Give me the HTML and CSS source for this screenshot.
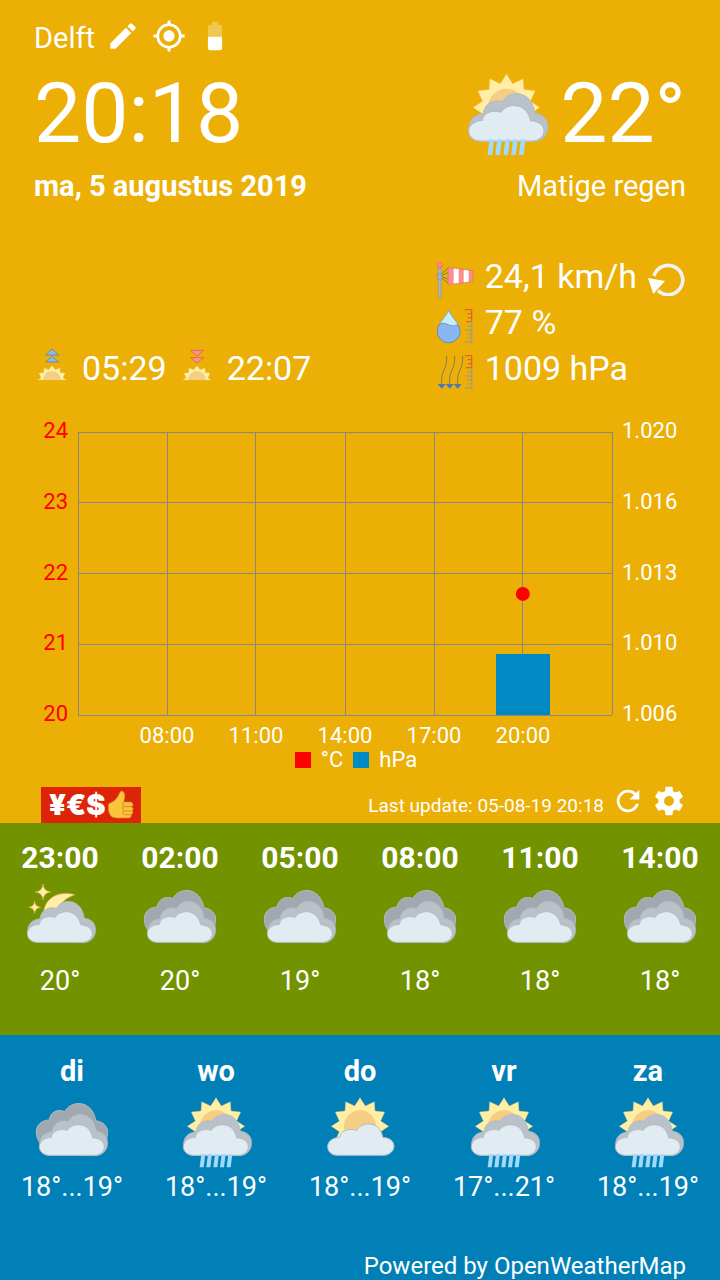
FILE: index.html
```html
<!DOCTYPE html>
<html lang="nl">
<head>
<meta charset="utf-8">
<meta name="viewport" content="width=device-width, initial-scale=1">
<title>Delft</title>
<link rel="stylesheet" href="styles.css">
</head>
<body>
<svg class="defs" aria-hidden="true">
  <defs>
    <g id="sun">
      <path class="sun-rays" d="M120 8L136 33L163 20L165 48L194 51L182 78L206 94L182 110L194 137L165 140L163 168L137 156L120 180L103 156L77 168L75 140L46 137L58 110L34 94L58 78L46 51L75 48L77 20L104 33Z"/>
      <circle class="sun-core" cx="120" cy="94" r="48"/>
    </g>
    <path id="cloud-light" class="cloud-light" d="M53 181C33 181 23 168 23 155C23 139 38 128 59 127C60 108 84 98 110 106C120 82 180 72 188 127C210 128 222 140 222 154C222 168 208 181 190 181Z"/>
    <g id="cloud-pair">
      <path class="cloud-mid" d="M53 181C30 178 22 163 23 143C25 122 42 111 60 110C62 86 84 72 110 79C125 47 185 48 193 108C216 112 227 125 227 144C227 167 210 182 190 182Z"/>
      <path class="cloud-light" d="M53 181C33 181 22 168 22 155C22 139 37 128 58 127C59 109 82 99 106 106C116 84 172 76 182 128C205 130 217 141 217 155C217 169 204 181 186 181Z"/>
    </g>
    <path id="rain" class="rain" d="M76 177h12l-5 40h-12zM96 177h12l-5 40h-12zM117 177h12l-5 40h-12zM137 177h12l-5 40h-12zM157 177h12l-5 40h-12z"/>
    <symbol id="rain-sun" viewBox="0 0 240 240"><use href="#sun"/><use href="#cloud-pair"/><use href="#rain"/></symbol>
    <symbol id="partly" viewBox="0 0 240 240"><use href="#sun"/><use href="#cloud-light"/></symbol>
    <symbol id="overcast" viewBox="0 0 240 240">
      <path class="cloud-dark" d="M40 155C20 145 13 130 13 110C13 90 30 75 52 75C54 52 76 40 98 50C118 13 182 15 191 77C212 80 227 92 227 112C227 130 220 145 205 155Z"/>
      <use href="#cloud-pair"/>
    </symbol>
    <symbol id="night" viewBox="0 0 240 240">
      <path class="moon" d="M165 38C122 26 78 42 71 88L112 88C118 64 140 46 165 38Z"/>
      <path class="moon" d="M69 6Q71 28 93 30Q71 32 69 54Q67 32 45 30Q67 28 69 6ZM44 58Q46 74 62 76Q46 78 44 94Q42 78 26 76Q42 74 44 58Z"/>
      <use href="#cloud-pair"/>
    </symbol>
    <g id="half-sun">
      <path class="sun-rays" d="M11 96L21 90L15 75L29 74L30 60L44 65L54 53L64 65L78 60L79 74L93 75L87 90L97 96Z"/>
      <path class="sun-core" d="M27 96a27 27 0 0 1 54 0z"/>
    </g>
    <g id="ruler" fill="none" stroke-width="4">
      <path stroke="#d9692a" d="M98 29H119V65M119 41H107M119 53H107M119 65H102"/>
      <path stroke="#ab9f72" d="M119 65V126H98M119 78H107M119 90H100M119 102H107M119 114H107"/>
    </g>
  </defs>
</svg>

<main class="app">
  <section class="current">
    <header class="topbar">
      <span class="city">Delft</span>
      <button class="icon-btn" aria-label="Plaats wijzigen"><svg viewBox="0 0 24 24"><path d="M3 17.25V21h3.75L17.81 9.94l-3.75-3.75L3 17.25zM20.71 7.04a1 1 0 0 0 0-1.41l-2.34-2.34a1 1 0 0 0-1.41 0l-1.83 1.83 3.75 3.75 1.83-1.83z"/></svg></button>
      <button class="icon-btn" aria-label="Huidige locatie"><svg viewBox="0 0 24 24"><path d="M12 8a4 4 0 1 0 0 8 4 4 0 0 0 0-8zm8.94 3A8.99 8.99 0 0 0 13 3.06V1h-2v2.06A8.99 8.99 0 0 0 3.06 11H1v2h2.06A8.99 8.99 0 0 0 11 20.94V23h2v-2.06A8.99 8.99 0 0 0 20.94 13H23v-2h-2.06zM12 19a7 7 0 1 1 0-14 7 7 0 0 1 0 14z"/></svg></button>
      <svg class="battery" viewBox="0 0 24 24" role="img" aria-label="Batterij"><path opacity=".3" d="M17 5.33C17 4.6 16.4 4 15.67 4H14V2h-4v2H8.33C7.6 4 7 4.6 7 5.33V12.5h10V5.33z"/><path d="M7 12.5v8.17C7 21.4 7.6 22 8.33 22h7.33c.74 0 1.34-.6 1.34-1.33V12.5H7z"/></svg>
    </header>

    <div class="now">
      <time class="big">20:18</time>
      <div class="now-temp">
        <svg class="now-icon"><use href="#rain-sun"/></svg>
        <span class="big">22°</span>
      </div>
    </div>
    <div class="summary">
      <strong>ma, 5 augustus 2019</strong>
      <span>Matige regen</span>
    </div>

    <div class="details">
      <div class="sun-times">
        <svg class="sun-icon" viewBox="0 0 108 120"><path class="tri-up" d="M35 21L54 3L74 21ZM35 42L54 25L74 42Z"/><use href="#half-sun"/></svg>
        <span>05:29</span>
        <svg class="sun-icon" viewBox="0 0 108 120"><path class="tri-down" d="M35 7L54 24L74 7ZM35 29L54 45L74 29Z"/><use href="#half-sun"/></svg>
        <span>22:07</span>
      </div>
      <div class="measures">
        <div class="measure">
          <svg class="measure-icon" viewBox="0 0 132 132">
            <path fill="none" stroke="#7b7f5c" stroke-width="3" d="M28 60L49 42M28 65L49 55M28 68L49 75M28 71L49 88"/>
            <path fill="#a8b8c8" stroke="#8798a8" stroke-width="2" d="M19 42h8v88h-8zM16 59h14v17H16z"/>
            <circle cx="23" cy="33" r="8" fill="#ff8a80" stroke="#e0675f" stroke-width="2"/>
            <path fill="#fff" d="M49 40L122 50V83L49 92Z"/>
            <path fill="#ff8c8c" d="M49 40L65 42V90L49 92ZM80 44L95 46V87L80 89ZM110 48L122 50V83L110 85Z"/>
            <path fill="none" stroke="#e0675f" stroke-width="2" d="M49 40L122 50V83L49 92Z"/>
          </svg>
          <span>24,1 km/h</span>
          <svg class="wind-dir" viewBox="0 0 120 120"><path fill="none" stroke="#f2f2f2" stroke-width="11" d="M24 60A44 44 0 1 1 36 104"/><path fill="#fff" d="M6 66L57 75L22 114Z"/></svg>
        </div>
        <div class="measure">
          <svg class="measure-icon" viewBox="0 0 132 132">
            <path fill="#c5ecff" stroke="#5b9bc4" stroke-width="2" d="M50 30C44 50 16 70 16 94A34 34 0 0 0 84 94C84 70 56 50 50 30Z"/>
            <path fill="#8bb7f0" stroke="#4e7ab5" stroke-width="2" d="M23 72Q37 66 49 74Q62 82 77 74Q84 84 84 94A34 34 0 0 1 16 94Q16 82 23 72Z"/>
            <use href="#ruler"/>
          </svg>
          <span>77 %</span>
        </div>
        <div class="measure">
          <svg class="measure-icon" viewBox="0 0 132 132">
            <path fill="none" stroke="#7f7d5f" stroke-width="3" d="M44 30C48 65 25 75 29 115M68 30C72 65 49 75 53 115M92 30C96 65 73 75 77 115"/>
            <path fill="#4778c0" d="M17 114h24l-12 14zM41 114h24l-12 14zM65 114h24l-12 14z"/>
            <use href="#ruler"/>
          </svg>
          <span>1009 hPa</span>
        </div>
      </div>
    </div>

    <div class="chart">
      <div class="axis axis-left"><span>24</span><span>23</span><span>22</span><span>21</span><span>20</span></div>
      <svg class="plot" role="img" aria-label="Temperatuur en luchtdruk">
        <g class="grid-lines">
          <line x1="0" x2="100%" y1="0" y2="0"/><line x1="0" x2="100%" y1="25%" y2="25%"/><line x1="0" x2="100%" y1="50%" y2="50%"/><line x1="0" x2="100%" y1="75%" y2="75%"/><line x1="0" x2="100%" y1="100%" y2="100%"/>
          <line x1="0" x2="0" y1="0" y2="100%"/><line x1="16.667%" x2="16.667%" y1="0" y2="100%"/><line x1="33.333%" x2="33.333%" y1="0" y2="100%"/><line x1="50%" x2="50%" y1="0" y2="100%"/><line x1="66.667%" x2="66.667%" y1="0" y2="100%"/><line x1="83.333%" x2="83.333%" y1="0" y2="100%"/><line x1="100%" x2="100%" y1="0" y2="100%"/>
        </g>
        <rect class="bar" x="78.2%" y="78.6%" width="10.1%" height="21.4%"/>
        <circle class="dot" cx="83.3%" cy="57.2%" r="7"/>
      </svg>
      <div class="axis axis-right"><span>1.020</span><span>1.016</span><span>1.013</span><span>1.010</span><span>1.006</span></div>
      <div class="axis-x"><span>08:00</span><span>11:00</span><span>14:00</span><span>17:00</span><span>20:00</span></div>
      <div class="legend">
        <i class="swatch swatch-temp"></i><span>°C</span>
        <i class="swatch swatch-press"></i><span>hPa</span>
      </div>
    </div>

    <footer class="status">
      <a class="yes" href="#"><span>¥€$</span><svg viewBox="0 0 84 90"><path fill="#fbc43d" stroke="#d98a1c" stroke-width="2" d="M4 48Q2 40 12 38Q30 30 38 8Q42 0 49 5Q57 12 50 36H70Q79 37 78 45Q77 49 73 50Q82 54 76 63Q81 69 73 74Q75 82 65 84H30Q16 84 10 76Q2 62 4 48Z"/><path fill="none" stroke="#d98a1c" stroke-width="3" d="M50 36Q44 42 50 50H74M47 50Q44 58 52 63H76M49 63Q44 70 53 74H73"/></svg></a>
      <span class="updated">Last update: 05-08-19 20:18</span>
      <button class="icon-btn" aria-label="Vernieuwen"><svg viewBox="0 0 24 24"><path d="M17.65 6.35A7.96 7.96 0 0 0 12 4a8 8 0 1 0 7.73 10h-2.08A6 6 0 1 1 12 6c1.66 0 3.14.69 4.22 1.78L13 11h7V4l-2.35 2.35z"/></svg></button>
      <button class="icon-btn" aria-label="Instellingen"><svg viewBox="0 0 24 24"><path d="M19.43 12.98c.04-.32.07-.64.07-.98s-.03-.66-.07-.98l2.11-1.65c.19-.15.24-.42.12-.64l-2-3.46c-.12-.22-.39-.3-.61-.22l-2.49 1c-.52-.4-1.08-.73-1.69-.98l-.38-2.65A.49.49 0 0 0 14 2h-4c-.25 0-.46.18-.49.42l-.38 2.65c-.61.25-1.17.59-1.69.98l-2.49-1c-.23-.09-.49 0-.61.22l-2 3.46c-.13.22-.07.49.12.64l2.11 1.65c-.04.32-.07.65-.07.98s.03.66.07.98l-2.11 1.65c-.19.15-.24.42-.12.64l2 3.46c.12.22.39.3.61.22l2.49-1c.52.4 1.08.73 1.69.98l.38 2.65c.03.24.24.42.49.42h4c.25 0 .46-.18.49-.42l.38-2.65c.61-.25 1.17-.59 1.69-.98l2.49 1c.23.09.49 0 .61-.22l2-3.46c.12-.22.07-.49-.12-.64l-2.11-1.65zM12 15.5a3.5 3.5 0 1 1 0-7 3.5 3.5 0 0 1 0 7z"/></svg></button>
    </footer>
  </section>

  <section class="forecast hours">
    <article><h2>23:00</h2><svg><use href="#night"/></svg><p>20°</p></article>
    <article><h2>02:00</h2><svg><use href="#overcast"/></svg><p>20°</p></article>
    <article><h2>05:00</h2><svg><use href="#overcast"/></svg><p>19°</p></article>
    <article><h2>08:00</h2><svg><use href="#overcast"/></svg><p>18°</p></article>
    <article><h2>11:00</h2><svg><use href="#overcast"/></svg><p>18°</p></article>
    <article><h2>14:00</h2><svg><use href="#overcast"/></svg><p>18°</p></article>
  </section>

  <section class="week">
    <div class="forecast days">
      <article><h2>di</h2><svg><use href="#overcast"/></svg><p>18°...19°</p></article>
      <article><h2>wo</h2><svg><use href="#rain-sun"/></svg><p>18°...19°</p></article>
      <article><h2>do</h2><svg><use href="#partly"/></svg><p>18°...19°</p></article>
      <article><h2>vr</h2><svg><use href="#rain-sun"/></svg><p>17°...21°</p></article>
      <article><h2>za</h2><svg><use href="#rain-sun"/></svg><p>18°...19°</p></article>
    </div>
    <a class="powered" href="#">Powered by OpenWeatherMap</a>
  </section>
</main>
</body>
</html>
```
FILE: styles.css
```css
* { box-sizing: border-box; }
body { margin: 0; background: #0080b7; color: #fff; font-family: Roboto, "Liberation Sans", sans-serif; }
h2, p { margin: 0; }
svg { display: block; flex: none; }
a { color: inherit; text-decoration: none; }
.defs { position: absolute; width: 0; height: 0; }

.app { display: flex; flex-direction: column; min-height: 100vh; }
.current { padding: 19px 34px 0; background: #ebaf05; }

.icon-btn { display: block; width: 34px; height: 34px; padding: 0; border: 0; background: none; color: inherit; }
.icon-btn svg, .battery { width: 34px; height: 34px; fill: #fff; }

.topbar { display: flex; align-items: center; gap: 12px; height: 34px; font-size: 29px; }
.city { margin-right: -1px; padding-top: 3px; }
.now { display: flex; justify-content: space-between; align-items: center; height: 112px; margin-top: 5px; }
.now-temp { display: flex; align-items: center; gap: 7px; }
.now-icon { width: 93px; height: 93px; margin-top: 6px; }
.big { font-size: 84px; line-height: 112px; }
.summary { display: flex; justify-content: space-between; margin-top: -2px; font-size: 29px; line-height: 36px; }

.details { display: flex; justify-content: space-between; align-items: flex-end; margin-top: 49px; font-size: 34px; line-height: 46px; }
.sun-times, .measure { display: flex; align-items: center; }
.sun-times { gap: 12px; }
.sun-icon { width: 36px; height: 40px; }
.measure { gap: 9px; }
.measure-icon { width: 44px; height: 44px; }
.wind-dir { width: 40px; height: 40px; }

.chart { display: grid; grid-template-columns: 44px 1fr 74px; margin-top: 28px; font-size: 22px; line-height: 24px; }
.axis { display: flex; flex-direction: column; justify-content: space-between; height: 307px; }
.axis-left { padding-right: 10px; color: #f00; text-align: right; }
.axis-right { padding-left: 10px; }
.plot { width: 100%; height: 283px; margin: 13px 0 11px; overflow: visible; }
.grid-lines { stroke: #888; stroke-width: 1; shape-rendering: crispEdges; }
.bar { fill: #008ac4; shape-rendering: crispEdges; }
.dot { fill: #f00; }
.axis-x { grid-column: 2; display: grid; grid-template-columns: repeat(5, 1fr); padding: 0 8.333%; margin-top: -2px; text-align: center; }
.legend { grid-column: 1 / -1; display: flex; justify-content: center; align-items: center; gap: 10px; padding-right: 8px; }
.swatch { width: 16px; height: 16px; }
.swatch-temp { background: #f00; }
.swatch-press { background: #008ac4; }

.status { display: flex; align-items: center; gap: 7px; height: 36px; margin-top: 15px; padding-left: 7px; font-size: 19px; }
.yes { display: flex; align-items: center; gap: 1px; height: 36px; margin-right: auto; padding: 0 6px 0 8px; background: #dd2408; font: 900 29px/36px Inter, "Open Sans", sans-serif; }
.yes svg { width: 28px; height: 30px; }
.status .icon-btn { margin-bottom: 8px; }

.forecast { display: grid; text-align: center; font-size: 27px; }
.forecast h2 { font-size: 29px; font-weight: 700; line-height: 36px; }
.forecast svg { width: 80px; height: 80px; margin: 6px auto 0; }
.hours { grid-template-columns: repeat(6, 1fr); padding: 17px 0 34px; background: #739200; }
.hours h2 { font-size: 30px; }
.hours p { line-height: 39px; }
.week { display: flex; flex: 1; flex-direction: column; justify-content: space-between; padding-top: 18px; background: #0080b7; }
.days { grid-template-columns: repeat(5, 1fr); }
.days p { line-height: 25px; }
.powered { align-self: flex-end; padding-right: 34px; font-size: 24px; line-height: 28px; }

.sun-rays { fill: #ffeea3; stroke: #e9c46a; stroke-width: 1; }
.sun-core { fill: #f5ce85; }
.cloud-light { fill: #e1ebf2; stroke: #b4bbc4; stroke-width: 3; }
.cloud-mid { fill: #b9c1c9; stroke: #aeb5be; stroke-width: 2; }
.cloud-dark { fill: #a1a8b0; stroke: #b4bac2; stroke-width: 3; }
.rain { fill: #a0dbff; }
.moon { fill: #ffeea3; stroke: #e0a955; stroke-width: 2; }
.tri-up { fill: #8bb7f0; stroke: #4e7ab5; stroke-width: 2; }
.tri-down { fill: #ff8f8f; stroke: #d9534f; stroke-width: 2; }
```
